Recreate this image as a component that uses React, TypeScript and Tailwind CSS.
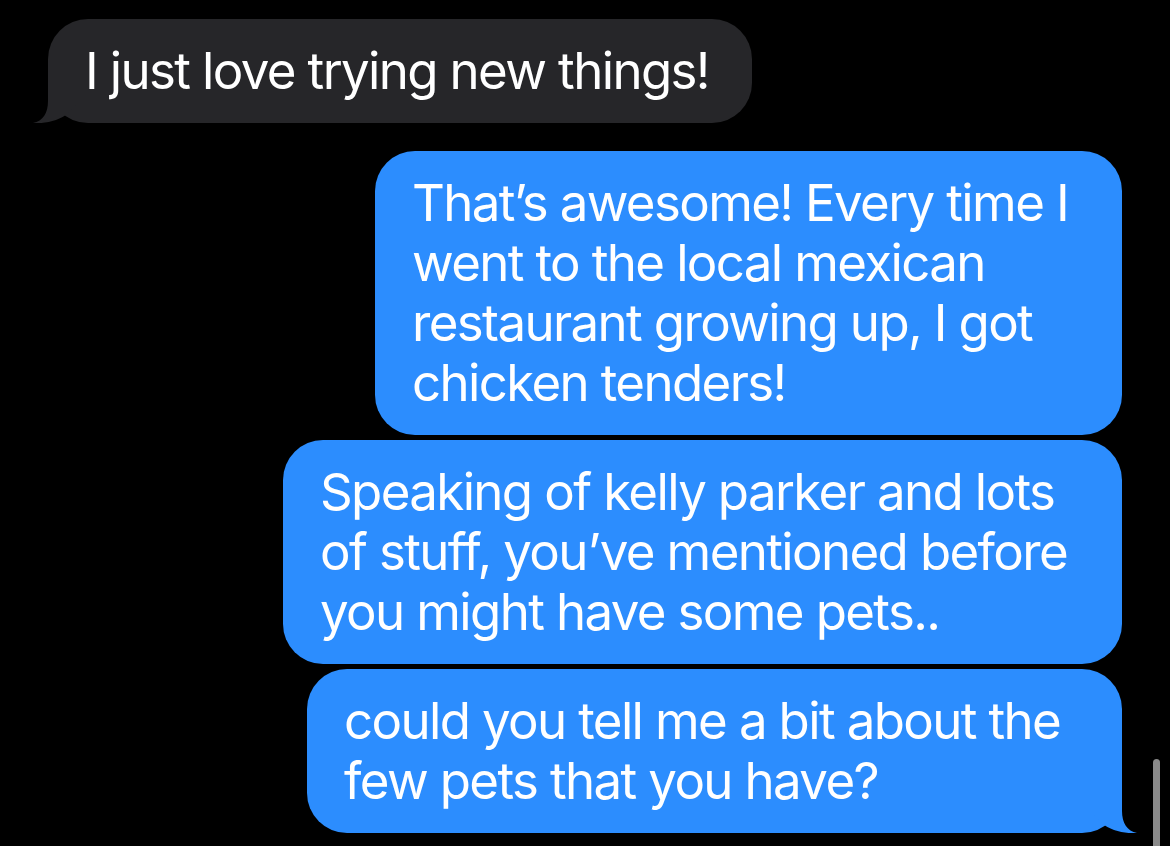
import React from 'react';

const RightTail = () => (
  <svg
    className="absolute right-[-16px] bottom-0"
    width="46"
    height="44"
    viewBox="-30 -44 46 44"
  >
    <path
      d="M -30 -44 L 0 -44 L 0 -22 C 0 -10 5 -2 15 0 C 5 1 -12 -2 -20 -10 L -30 -20 Z"
      fill="#2c8dfe"
    />
  </svg>
);

const LeftTail = () => (
  <svg
    className="absolute left-[-16px] bottom-0"
    width="46"
    height="44"
    viewBox="-16 -44 46 44"
  >
    <path
      d="M 30 -44 L 0 -44 L 0 -22 C 0 -10 -5 -2 -15 0 C -5 1 12 -2 20 -10 L 30 -20 Z"
      fill="#262629"
    />
  </svg>
);

const Bubble = ({
  lines,
  width,
  tail,
}: {
  lines: string[];
  width: string;
  tail?: boolean;
}) => (
  <div
    className={`relative ${width} rounded-[40px] bg-[#2c8dfe] pl-[37px] pr-[30px] py-[22px] text-white`}
  >
    {lines.map((l, i) => (
      <div key={i} className="whitespace-nowrap">
        {l}
      </div>
    ))}
    {tail && <RightTail />}
  </div>
);

export default function App() {
  return (
    <div
      className="relative w-[1170px] h-[846px] overflow-hidden bg-black text-[51px] leading-[60px] tracking-[-0.032em]"
      style={{ fontFamily: 'Inter, "Noto Sans", sans-serif' }}
    >
      <div className="flex flex-col pt-[19px]">
        {/* incoming */}
        <div className="relative ml-[48px] w-[704px] rounded-[40px] bg-[#262629] pl-[37px] py-[22px] text-white">
          <div className="whitespace-nowrap">I just love trying new things!</div>
          <LeftTail />
        </div>

        {/* outgoing */}
        <div className="mt-[28px] mr-[48px] flex flex-col items-end gap-[5px]">
          <Bubble
            width="w-[747px]"
            lines={[
              'That’s awesome! Every time I',
              'went to the local mexican',
              'restaurant growing up, I got',
              'chicken tenders!',
            ]}
          />
          <Bubble
            width="w-[839px]"
            lines={[
              'Speaking of kelly parker and lots',
              'of stuff, you’ve mentioned before',
              'you might have some pets..',
            ]}
          />
          <Bubble
            width="w-[815px]"
            tail
            lines={['could you tell me a bit about the', 'few pets that you have?']}
          />
        </div>
      </div>

      {/* scroll indicator */}
      <div className="absolute left-[1153px] top-[759px] h-[100px] w-[7px] rounded-full bg-[#8a8a8a]" />
    </div>
  );
}
